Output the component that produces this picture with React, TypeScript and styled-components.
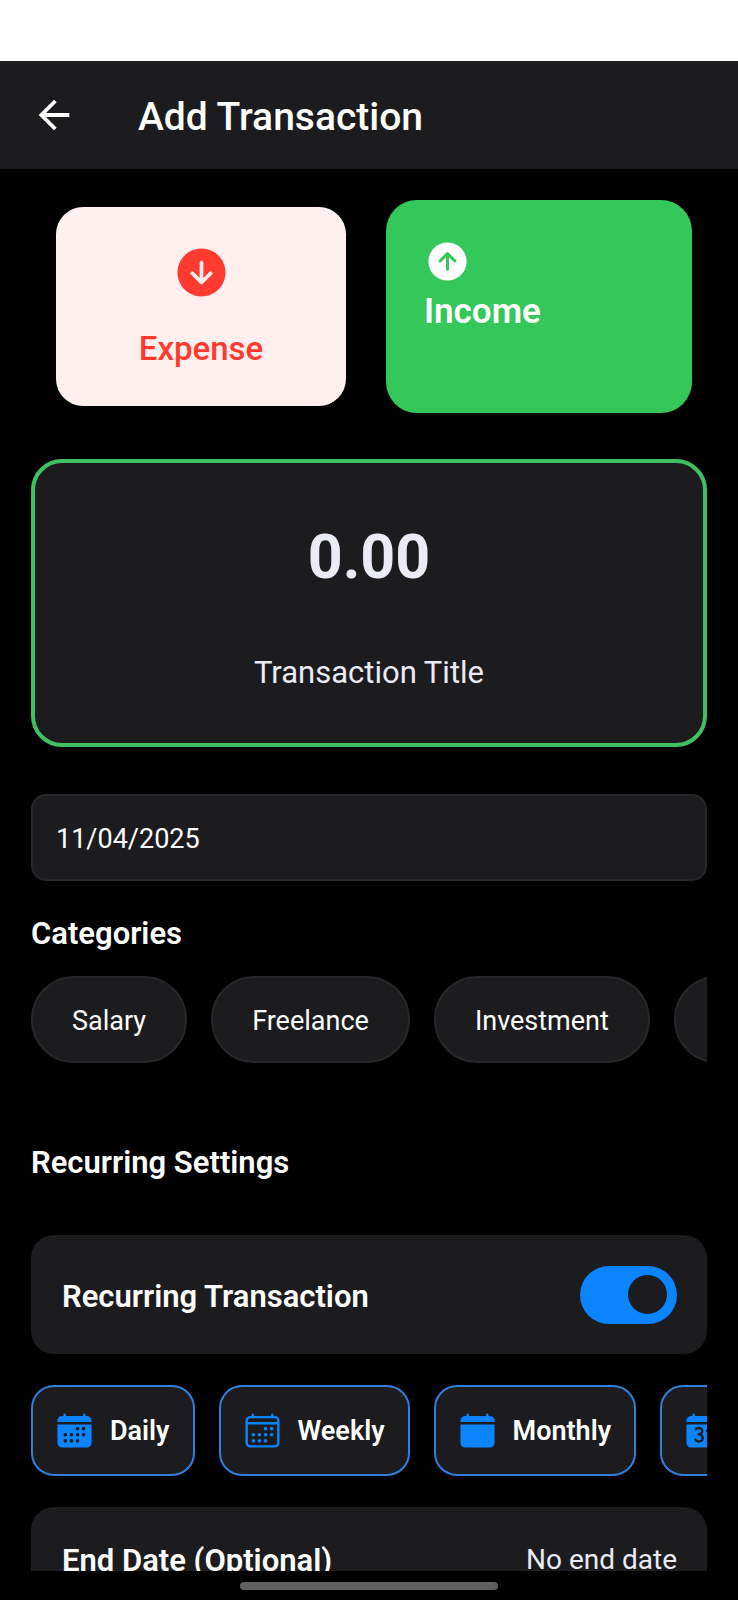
import React, { useState } from "react";
import styled, { createGlobalStyle } from "styled-components";
import {
  IoArrowDownCircle,
  IoArrowUpCircle,
  IoCalendar,
  IoCalendarClear,
  IoCalendarNumber,
  IoCalendarOutline,
} from "react-icons/io5";
import { MdArrowBack } from "react-icons/md";

const color = {
  surface: "#1c1c1e",
  line: "#272729",
  text: "#ffffff",
  muted: "#ebebf5",
  blue: "#0a84ff",
  blueLine: "#2f7fdc",
  green: "#34c759",
  greenLine: "#3fc161",
  red: "#ff3b30",
  redTint: "#ffefee",
};

const GlobalStyle = createGlobalStyle`
  * { box-sizing: border-box; }
  body { margin: 0; background: #000; }
  body, button, input { font-family: Roboto, "Liberation Sans", sans-serif; }
  button, input { margin: 0; }
`;

const Screen = styled.div`
  display: flex;
  flex-direction: column;
  height: 100vh;
  color: ${color.text};
  background: #000;
`;

const StatusBar = styled.div`
  flex: none;
  height: 61px;
  background: #fff;
`;

const Header = styled.header`
  flex: none;
  display: flex;
  align-items: center;
  gap: 61px;
  height: 108px;
  padding: 0 31px;
  background: ${color.surface};
`;

const BackButton = styled.button`
  display: flex;
  padding: 0;
  border: 0;
  background: none;
  color: inherit;
  font-size: 46px;
`;

const Title = styled.h1`
  margin: 0;
  padding-top: 4px;
  font-size: 39px;
  line-height: 46px;
  font-weight: 500;
`;

const Content = styled.main`
  flex: 1;
  min-height: 0;
  overflow: hidden;
  padding: 31px 31px 0;
`;

const TypeRow = styled.div`
  display: grid;
  grid-template-columns: 290fr 306fr;
  align-items: center;
  gap: 40px;
  padding: 0 15px 0 25px;
`;

const ExpenseButton = styled.button`
  display: flex;
  flex-direction: column;
  align-items: center;
  gap: 27px;
  height: 199px;
  padding: 36px 0 0;
  border: 0;
  border-radius: 27px;
  background: ${color.redTint};
  color: ${color.red};
  font-size: 33px;
  line-height: 40px;
  font-weight: 500;

  svg { font-size: 59px; }
`;

const IncomeButton = styled.button`
  display: flex;
  flex-direction: column;
  align-items: flex-start;
  gap: 7px;
  height: 213px;
  padding: 38px;
  border: 0;
  border-radius: 31px;
  background: ${color.green};
  color: ${color.text};
  font-size: 35px;
  line-height: 40px;
  font-weight: 600;

  svg { font-size: 47px; }
`;

const AmountCard = styled.section`
  display: flex;
  flex-direction: column;
  align-items: center;
  gap: 58px;
  height: 288px;
  margin-top: 46px;
  padding: 57px 31px 0;
  border: 4px solid ${color.greenLine};
  border-radius: 31px;
  background: ${color.surface};
`;

const CenterInput = styled.input<{ $large?: boolean }>`
  width: 100%;
  height: ${(p) => (p.$large ? 74 : 40)}px;
  padding: 0;
  border: 0;
  outline: 0;
  background: none;
  color: ${color.muted};
  text-align: center;
  font-size: ${(p) => (p.$large ? 61 : 31)}px;
  font-weight: ${(p) => (p.$large ? 700 : 400)};

  &::placeholder { color: ${color.muted}; opacity: 1; }
`;

const DateInput = styled.input`
  display: block;
  width: 100%;
  height: 87px;
  margin-top: 47px;
  padding: 3px 23px 0;
  border: 2px solid ${color.line};
  border-radius: 15px;
  outline: 0;
  background: ${color.surface};
  color: ${color.text};
  font-size: 27px;
`;

const SectionTitle = styled.h2<{ $gap: number }>`
  margin: ${(p) => p.$gap}px 0 0;
  font-size: 31px;
  line-height: 36px;
  font-weight: 600;
`;

const Strip = styled.div<{ $gap: number }>`
  display: flex;
  gap: 24px;
  margin-top: ${(p) => p.$gap}px;
  overflow: hidden;
`;

const Chip = styled.button`
  flex: none;
  height: 87px;
  padding: 2px 39px 0;
  border: 2px solid ${color.line};
  border-radius: 43px;
  background: ${color.surface};
  color: ${color.text};
  font-size: 27px;
`;

const SettingRow = styled.div<{ $height: number; $gap: number }>`
  display: flex;
  align-items: center;
  justify-content: space-between;
  height: ${(p) => p.$height}px;
  margin-top: ${(p) => p.$gap}px;
  padding: 0 30px 0 31px;
  border-radius: 23px;
  background: ${color.surface};
`;

const SettingLabel = styled.label`
  padding-top: 4px;
  font-size: 31px;
  line-height: 36px;
  font-weight: 600;
`;

const Switch = styled.input`
  appearance: none;
  display: flex;
  align-items: center;
  width: 97px;
  height: 58px;
  margin: 0;
  padding: 0 10px;
  border-radius: 29px;
  background: #39393d;

  &::before {
    content: "";
    width: 39px;
    height: 39px;
    border-radius: 50%;
    background: ${color.surface};
  }

  &:checked {
    justify-content: flex-end;
    background: ${color.blue};
  }
`;

const FrequencyButton = styled.button`
  flex: none;
  display: flex;
  align-items: center;
  gap: 16px;
  height: 91px;
  padding: 0 23px 0 22px;
  border: 2px solid ${color.blueLine};
  border-radius: 23px;
  background: ${color.surface};
  color: ${color.text};
  font-size: 27px;
  font-weight: 600;

  svg {
    color: ${color.blue};
    font-size: 39px;
  }
`;

const EndDateButton = styled.button`
  padding: 3px 0 0;
  border: 0;
  background: none;
  color: ${color.muted};
  font-size: 28px;
  line-height: 36px;
`;

const NavBar = styled.div`
  flex: none;
  display: flex;
  justify-content: center;
  height: 29px;
  padding-top: 11px;
`;

const NavHandle = styled.div`
  width: 35%;
  height: 8px;
  border-radius: 4px;
  background: #606060;
`;

const categories = ["Salary", "Freelance", "Investment", "Gift"];

const frequencies = [
  { name: "Daily", Icon: IoCalendar },
  { name: "Weekly", Icon: IoCalendarOutline },
  { name: "Monthly", Icon: IoCalendarClear },
  { name: "Yearly", Icon: IoCalendarNumber },
];

export default function App() {
  const [amount, setAmount] = useState("");
  const [title, setTitle] = useState("");
  const [date, setDate] = useState("11/04/2025");
  const [recurring, setRecurring] = useState(true);

  return (
    <Screen>
      <GlobalStyle />
      <StatusBar />
      <Header>
        <BackButton type="button" aria-label="Back">
          <MdArrowBack />
        </BackButton>
        <Title>Add Transaction</Title>
      </Header>
      <Content>
        <TypeRow>
          <ExpenseButton type="button" aria-pressed={false}>
            <IoArrowDownCircle />
            Expense
          </ExpenseButton>
          <IncomeButton type="button" aria-pressed>
            <IoArrowUpCircle />
            Income
          </IncomeButton>
        </TypeRow>

        <AmountCard>
          <CenterInput
            $large
            aria-label="Amount"
            inputMode="decimal"
            placeholder="0.00"
            value={amount}
            onChange={(e) => setAmount(e.target.value)}
          />
          <CenterInput
            aria-label="Transaction Title"
            placeholder="Transaction Title"
            value={title}
            onChange={(e) => setTitle(e.target.value)}
          />
        </AmountCard>

        <DateInput aria-label="Date" value={date} onChange={(e) => setDate(e.target.value)} />

        <SectionTitle $gap={35}>Categories</SectionTitle>
        <Strip $gap={24}>
          {categories.map((name) => (
            <Chip type="button" key={name}>
              {name}
            </Chip>
          ))}
        </Strip>

        <SectionTitle $gap={82}>Recurring Settings</SectionTitle>
        <SettingRow $height={119} $gap={54}>
          <SettingLabel htmlFor="recurring">Recurring Transaction</SettingLabel>
          <Switch
            id="recurring"
            type="checkbox"
            role="switch"
            checked={recurring}
            onChange={(e) => setRecurring(e.target.checked)}
          />
        </SettingRow>
        <Strip $gap={31}>
          {frequencies.map(({ name, Icon }) => (
            <FrequencyButton type="button" key={name}>
              <Icon />
              {name}
            </FrequencyButton>
          ))}
        </Strip>
        <SettingRow $height={103} $gap={31}>
          <SettingLabel htmlFor="end-date">End Date (Optional)</SettingLabel>
          <EndDateButton id="end-date" type="button">
            No end date
          </EndDateButton>
        </SettingRow>
      </Content>
      <NavBar>
        <NavHandle />
      </NavBar>
    </Screen>
  );
}
